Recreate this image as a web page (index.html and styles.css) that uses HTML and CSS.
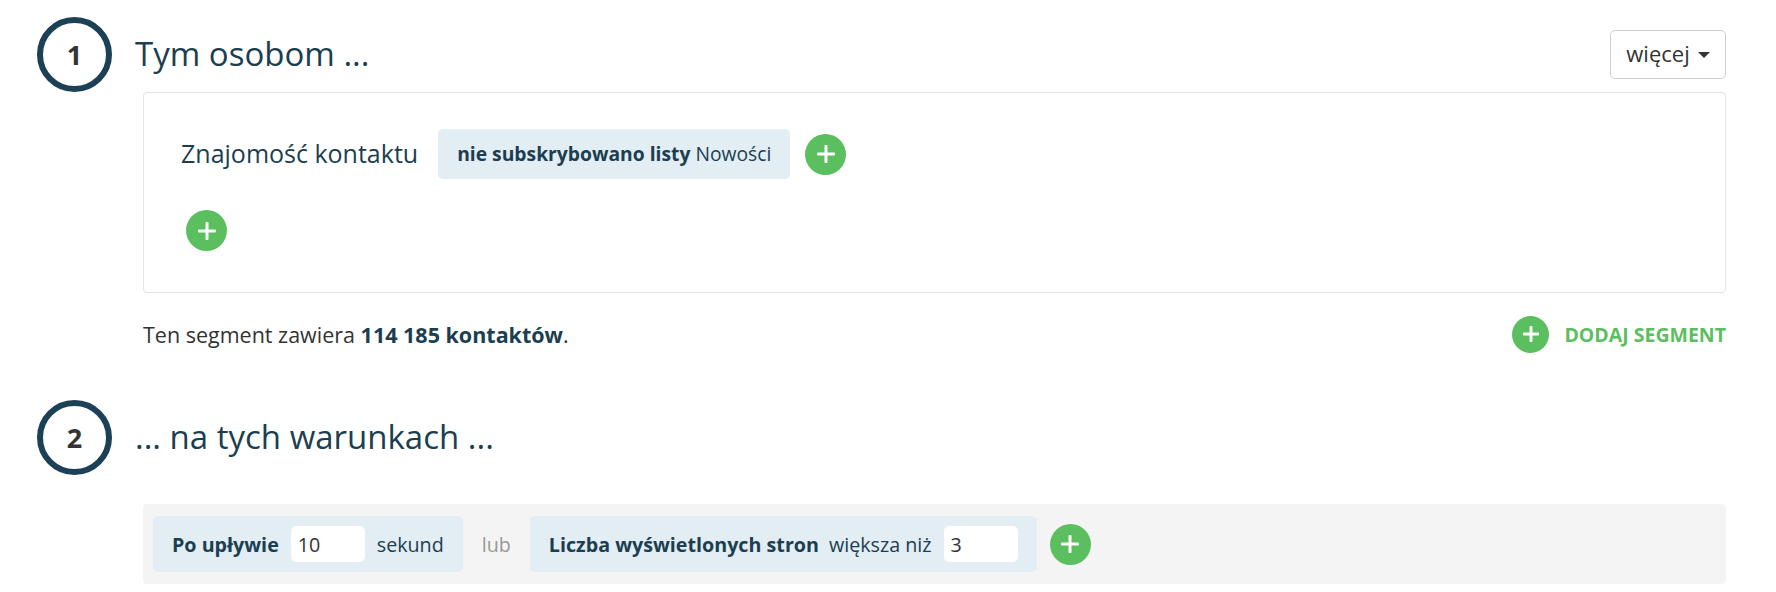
FILE: index.html
```html
<!DOCTYPE html>
<html lang="pl">
<head>
<meta charset="utf-8">
<link rel="stylesheet" href="styles.css">
</head>
<body>
<div class="page">
  <section class="step">
    <div class="step-head">
      <div class="step-num">1</div>
      <h2 class="step-title">Tym osobom ...</h2>
      <button class="more-btn">więcej <span class="caret"></span></button>
    </div>
    <div class="step-body">
      <div class="seg-box">
        <div class="cond-row">
          <span class="cond-label">Znajomość kontaktu</span>
          <span class="chip"><b>nie subskrybowano listy</b> Nowości</span>
          <span class="plus"></span>
        </div>
        <div class="add-row">
          <span class="plus"></span>
        </div>
      </div>
      <div class="seg-footer">
        <p class="seg-count">Ten segment zawiera <b>114 185 kontaktów</b>.</p>
        <a class="add-seg"><span class="plus plus-sm"></span>DODAJ SEGMENT</a>
      </div>
    </div>
  </section>
  <section class="step step-2">
    <div class="step-head">
      <div class="step-num">2</div>
      <h2 class="step-title">... na tych warunkach ...</h2>
    </div>
    <div class="step-body">
      <div class="cond-box">
        <div class="rule">
          <b>Po upływie</b>
          <span class="field">10</span>
          <span>sekund</span>
        </div>
        <span class="or">lub</span>
        <div class="rule">
          <b>Liczba wyświetlonych stron</b>
          <span>większa niż</span>
          <span class="field">3</span>
        </div>
        <span class="plus"></span>
      </div>
    </div>
  </section>
</div>
</body>
</html>
```
FILE: styles.css
```css
* { box-sizing: border-box; }
html, body { margin: 0; padding: 0; background: #fff; }
body {
  font-family: "Open Sans", "Noto Sans", sans-serif;
  color: #333;
  width: 1776px;
  height: 592px;
  overflow: hidden;
}
.page { padding: 17px 50px 0 37px; }

.step-head {
  display: flex;
  align-items: center;
  height: 75px;
}
.step-num {
  width: 75px;
  height: 75px;
  border: 6px solid #1c4157;
  border-radius: 50%;
  display: flex;
  align-items: center;
  justify-content: center;
  font-size: 27px;
  font-weight: 700;
  color: #333;
  flex: none;
}
.step-title {
  margin: 0 0 0 23px;
  font-size: 33px;
  font-weight: 400;
  color: #1b3e50;
  flex: 1;
  line-height: 1;
  padding-bottom: 3px;
}
.more-btn {
  font-family: inherit;
  font-size: 22px;
  color: #333;
  background: #fff;
  border: 1px solid #cfcfcf;
  border-radius: 5px;
  height: 49px;
  width: 116px;
  padding: 0 0 4px 0;
  display: flex;
  align-items: center;
  justify-content: center;
  gap: 8px;
}
.caret {
  width: 0; height: 0;
  border-left: 6px solid transparent;
  border-right: 6px solid transparent;
  border-top: 6px solid #333;
  margin-top: 4px;
}

.step-body { margin-left: 106px; }

.seg-box {
  border: 1px solid #e3e3e3;
  border-radius: 4px;
  height: 201px;
  padding: 36px 0 0 37px;
}
.cond-row {
  display: flex;
  align-items: center;
  height: 50px;
}
.cond-label {
  font-size: 25px;
  color: #1b3e50;
  margin-right: 20px;
  padding-bottom: 2px;
}
.chip {
  background: #e2edf4;
  border-radius: 5px;
  height: 50px;
  display: flex;
  align-items: center;
  padding: 0 19px 1px;
  font-size: 19.3px;
  color: #1b3e50;
  gap: 5px;
  margin-right: 15px;
}
.chip b { font-weight: 700; }
.plus {
  width: 41px;
  height: 41px;
  border-radius: 50%;
  background: #5bbf5f;
  position: relative;
  flex: none;
  display: inline-block;
}
.plus::before, .plus::after {
  content: "";
  position: absolute;
  background: #fff;
  left: 50%; top: 50%;
  transform: translate(-50%, -50%);
  border-radius: 1px;
}
.plus::before { width: 18px; height: 3px; }
.plus::after { width: 3px; height: 18px; }
.add-row { margin: 31px 0 0 5px; display: flex; }

.seg-footer {
  display: flex;
  align-items: center;
  justify-content: space-between;
  height: 84px;
  padding-bottom: 2px;
}
.seg-count {
  margin: 0;
  font-size: 21.5px;
  color: #333;
}
.seg-count b { color: #1b3e50; }
.add-seg {
  display: flex;
  align-items: center;
  gap: 15px;
  font-size: 19.5px;
  font-weight: 700;
  color: #5bbf5f;
}
.plus-sm { width: 37px; height: 37px; }
.plus-sm::before { width: 16px; height: 3px; }
.plus-sm::after { width: 3px; height: 16px; }

.step-2 { margin-top: 23px; }
.cond-box {
  margin-top: 29px;
  background: #f4f4f4;
  border-radius: 4px;
  padding: 12px 10px;
  display: flex;
  align-items: center;
}
.rule {
  background: #e2edf4;
  border-radius: 5px;
  height: 56px;
  padding: 0 19px;
  display: flex;
  align-items: center;
  gap: 12px;
  font-size: 19.7px;
  color: #1b3e50;
}
.rule b { font-weight: 700; }
.rule b + span:not(.field) { margin-left: -2px; }
.field {
  background: #fff;
  border-radius: 5px;
  width: 74px;
  height: 36px;
  display: flex;
  align-items: center;
  padding-left: 7px;
  color: #333;
  font-size: 19.7px;
}
.or {
  color: #999;
  font-size: 19.7px;
  margin: 0 19px;
}
.cond-box .plus { margin-left: 13px; }
```
